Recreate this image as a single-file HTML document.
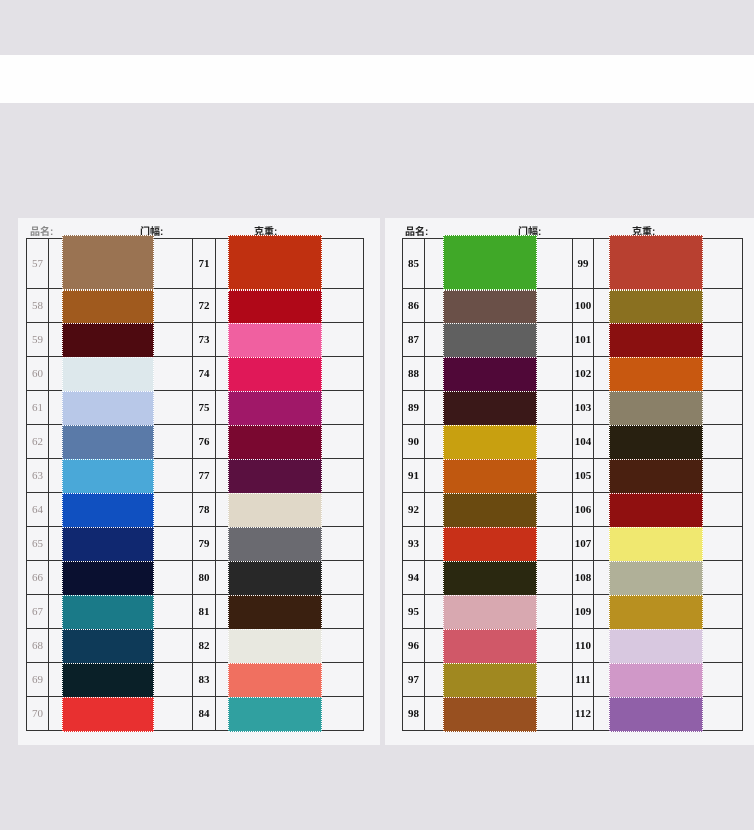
<!DOCTYPE html>
<html><head><meta charset="utf-8"><style>
body{margin:0;width:754px;height:830px;background:#e3e1e6;position:relative;overflow:hidden;font-family:"Liberation Serif",serif}
.band{position:absolute;left:0;top:55px;width:754px;height:48px;background:#fefefe}
.page{position:absolute;top:218px;height:527px;background:#f5f5f7}
table{position:absolute;top:238px;border-collapse:collapse;table-layout:fixed}
td{border:1px solid #333;padding:0;text-align:center;font-size:11px;font-weight:bold;color:#111}
td.g{color:#9a9090;font-weight:normal}
tr{height:34px}tr.f{height:50px}
.h{position:absolute;top:223px;font-family:"Liberation Sans","Noto Sans CJK SC",sans-serif;font-size:10px;font-weight:bold;color:#222}
.s{position:absolute;outline:1px dotted #fff;outline-offset:-1px}
</style></head><body>
<div class="band"></div>
<div class="page" style="left:18px;width:362px"></div>
<div class="page" style="left:385px;width:369px"></div>
<div class="h" style="left:30px;color:#888">品名:</div>
<div class="h" style="left:140px">门幅:</div>
<div class="h" style="left:254px">克重:</div>
<div class="h" style="left:405px">品名:</div>
<div class="h" style="left:518px">门幅:</div>
<div class="h" style="left:632px">克重:</div>
<table style="left:26px;width:337px">
<colgroup><col style="width:22px"><col style="width:144px"><col style="width:23px"><col style="width:148px"></colgroup>
<tr class="f"><td class="g">57</td><td></td><td>71</td><td></td></tr>
<tr><td class="g">58</td><td></td><td>72</td><td></td></tr>
<tr><td class="g">59</td><td></td><td>73</td><td></td></tr>
<tr><td class="g">60</td><td></td><td>74</td><td></td></tr>
<tr><td class="g">61</td><td></td><td>75</td><td></td></tr>
<tr><td class="g">62</td><td></td><td>76</td><td></td></tr>
<tr><td class="g">63</td><td></td><td>77</td><td></td></tr>
<tr><td class="g">64</td><td></td><td>78</td><td></td></tr>
<tr><td class="g">65</td><td></td><td>79</td><td></td></tr>
<tr><td class="g">66</td><td></td><td>80</td><td></td></tr>
<tr><td class="g">67</td><td></td><td>81</td><td></td></tr>
<tr><td class="g">68</td><td></td><td>82</td><td></td></tr>
<tr><td class="g">69</td><td></td><td>83</td><td></td></tr>
<tr><td class="g">70</td><td></td><td>84</td><td></td></tr>
</table>
<table style="left:402px;width:340px">
<colgroup><col style="width:22px"><col style="width:148px"><col style="width:21px"><col style="width:149px"></colgroup>
<tr class="f"><td>85</td><td></td><td>99</td><td></td></tr>
<tr><td>86</td><td></td><td>100</td><td></td></tr>
<tr><td>87</td><td></td><td>101</td><td></td></tr>
<tr><td>88</td><td></td><td>102</td><td></td></tr>
<tr><td>89</td><td></td><td>103</td><td></td></tr>
<tr><td>90</td><td></td><td>104</td><td></td></tr>
<tr><td>91</td><td></td><td>105</td><td></td></tr>
<tr><td>92</td><td></td><td>106</td><td></td></tr>
<tr><td>93</td><td></td><td>107</td><td></td></tr>
<tr><td>94</td><td></td><td>108</td><td></td></tr>
<tr><td>95</td><td></td><td>109</td><td></td></tr>
<tr><td>96</td><td></td><td>110</td><td></td></tr>
<tr><td>97</td><td></td><td>111</td><td></td></tr>
<tr><td>98</td><td></td><td>112</td><td></td></tr>
</table>
<div class="s" style="left:62px;width:92px;top:235px;height:55px;background:#9a7352"></div>
<div class="s" style="left:62px;width:92px;top:290px;height:34px;background:#a05a1e"></div>
<div class="s" style="left:62px;width:92px;top:323px;height:35px;background:#4e0a10"></div>
<div class="s" style="left:62px;width:92px;top:357px;height:35px;background:#dde8ec"></div>
<div class="s" style="left:62px;width:92px;top:391px;height:35px;background:#b8c8e8"></div>
<div class="s" style="left:62px;width:92px;top:425px;height:35px;background:#5a7aa8"></div>
<div class="s" style="left:62px;width:92px;top:459px;height:35px;background:#4aa8d8"></div>
<div class="s" style="left:62px;width:92px;top:493px;height:35px;background:#1050c0"></div>
<div class="s" style="left:62px;width:92px;top:527px;height:35px;background:#102870"></div>
<div class="s" style="left:62px;width:92px;top:561px;height:35px;background:#0a1030"></div>
<div class="s" style="left:62px;width:92px;top:595px;height:35px;background:#1a7a88"></div>
<div class="s" style="left:62px;width:92px;top:629px;height:35px;background:#0e3a58"></div>
<div class="s" style="left:62px;width:92px;top:663px;height:35px;background:#0a2028"></div>
<div class="s" style="left:62px;width:92px;top:697px;height:35px;background:#e83030"></div>
<div class="s" style="left:228px;width:94px;top:235px;height:55px;background:#c03010"></div>
<div class="s" style="left:228px;width:94px;top:290px;height:34px;background:#b00818"></div>
<div class="s" style="left:228px;width:94px;top:323px;height:35px;background:#f060a0"></div>
<div class="s" style="left:228px;width:94px;top:357px;height:35px;background:#e01858"></div>
<div class="s" style="left:228px;width:94px;top:391px;height:35px;background:#a01868"></div>
<div class="s" style="left:228px;width:94px;top:425px;height:35px;background:#7a0830"></div>
<div class="s" style="left:228px;width:94px;top:459px;height:35px;background:#5a1040"></div>
<div class="s" style="left:228px;width:94px;top:493px;height:35px;background:#e0d8c8"></div>
<div class="s" style="left:228px;width:94px;top:527px;height:35px;background:#6a6a70"></div>
<div class="s" style="left:228px;width:94px;top:561px;height:35px;background:#282828"></div>
<div class="s" style="left:228px;width:94px;top:595px;height:35px;background:#3a2010"></div>
<div class="s" style="left:228px;width:94px;top:629px;height:35px;background:#e8e8e0"></div>
<div class="s" style="left:228px;width:94px;top:663px;height:35px;background:#f07060"></div>
<div class="s" style="left:228px;width:94px;top:697px;height:35px;background:#30a0a0"></div>
<div class="s" style="left:443px;width:94px;top:235px;height:55px;background:#40a828"></div>
<div class="s" style="left:443px;width:94px;top:290px;height:34px;background:#6a5048"></div>
<div class="s" style="left:443px;width:94px;top:323px;height:35px;background:#606060"></div>
<div class="s" style="left:443px;width:94px;top:357px;height:35px;background:#500838"></div>
<div class="s" style="left:443px;width:94px;top:391px;height:35px;background:#3a1818"></div>
<div class="s" style="left:443px;width:94px;top:425px;height:35px;background:#c8a010"></div>
<div class="s" style="left:443px;width:94px;top:459px;height:35px;background:#c05810"></div>
<div class="s" style="left:443px;width:94px;top:493px;height:35px;background:#6a4a10"></div>
<div class="s" style="left:443px;width:94px;top:527px;height:35px;background:#c83018"></div>
<div class="s" style="left:443px;width:94px;top:561px;height:35px;background:#2a2810"></div>
<div class="s" style="left:443px;width:94px;top:595px;height:35px;background:#d8a8b0"></div>
<div class="s" style="left:443px;width:94px;top:629px;height:35px;background:#d05868"></div>
<div class="s" style="left:443px;width:94px;top:663px;height:35px;background:#a08820"></div>
<div class="s" style="left:443px;width:94px;top:697px;height:35px;background:#985020"></div>
<div class="s" style="left:609px;width:94px;top:235px;height:55px;background:#b84030"></div>
<div class="s" style="left:609px;width:94px;top:290px;height:34px;background:#8a7020"></div>
<div class="s" style="left:609px;width:94px;top:323px;height:35px;background:#8a1010"></div>
<div class="s" style="left:609px;width:94px;top:357px;height:35px;background:#c85810"></div>
<div class="s" style="left:609px;width:94px;top:391px;height:35px;background:#8a8068"></div>
<div class="s" style="left:609px;width:94px;top:425px;height:35px;background:#282010"></div>
<div class="s" style="left:609px;width:94px;top:459px;height:35px;background:#4a2010"></div>
<div class="s" style="left:609px;width:94px;top:493px;height:35px;background:#901010"></div>
<div class="s" style="left:609px;width:94px;top:527px;height:35px;background:#f0e870"></div>
<div class="s" style="left:609px;width:94px;top:561px;height:35px;background:#b0b098"></div>
<div class="s" style="left:609px;width:94px;top:595px;height:35px;background:#b89020"></div>
<div class="s" style="left:609px;width:94px;top:629px;height:35px;background:#d8c8e0"></div>
<div class="s" style="left:609px;width:94px;top:663px;height:35px;background:#d098c8"></div>
<div class="s" style="left:609px;width:94px;top:697px;height:35px;background:#9060a8"></div>
</body></html>
